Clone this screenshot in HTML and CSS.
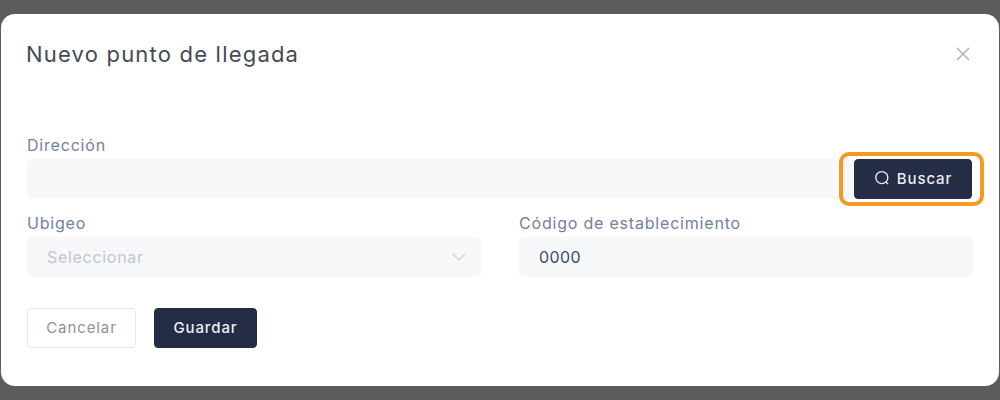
FILE: index.html
```html
<!DOCTYPE html>
<html lang="es">
<head>
    <meta charset="UTF-8">
    <title>Nuevo punto de llegada</title>
    <link rel="stylesheet" href="styles.css">
</head>
<body>
    <div class="modal">
        <div class="modal-header">
            <h2 class="modal-title">Nuevo punto de llegada</h2>
            <svg class="close-icon" width="14" height="14" viewBox="0 0 14 14" fill="none" stroke="#a9adb5" stroke-width="1.4">
                <path d="M1 1 L13 13 M13 1 L1 13"/>
            </svg>
        </div>

        <div class="field">
            <label class="field-label">Dirección</label>
            <div class="search-row">
                <div class="input"></div>
                <button class="btn btn-dark btn-search">
                    <svg width="16" height="16" viewBox="0 0 16 16" fill="none" stroke="#e4e7ec" stroke-width="1.4">
                        <circle cx="7.8" cy="7.6" r="6"/>
                        <path d="M12 12 L14 14"/>
                    </svg>
                    Buscar
                </button>
                <span class="highlight"></span>
            </div>
        </div>

        <div class="field-grid">
            <div class="field">
                <label class="field-label">Ubigeo</label>
                <div class="input select">
                    <span class="placeholder">Seleccionar</span>
                    <svg width="14" height="8" viewBox="0 0 14 8" fill="none" stroke="#ccced3" stroke-width="1.2">
                        <path d="M1 1 L7 7 L13 1"/>
                    </svg>
                </div>
            </div>
            <div class="field">
                <label class="field-label">Código de establecimiento</label>
                <div class="input value">0000</div>
            </div>
        </div>

        <div class="actions">
            <button class="btn btn-light">Cancelar</button>
            <button class="btn btn-dark">Guardar</button>
        </div>
    </div>
</body>
</html>
```

FILE: styles.css
```css
body {
    margin: 0;
    height: 400px;
    padding: 14px 1px;
    box-sizing: border-box;
    background: #5c5c5c;
    font-family: Inter, "Open Sans", sans-serif;
    overflow: hidden;
}
.modal {
    height: 372px;
    box-sizing: border-box;
    padding: 0 26px;
    background: #fff;
    border-radius: 14px;
}
.modal-header {
    display: flex;
    justify-content: space-between;
    align-items: center;
    height: 80px;
    margin-bottom: 41px;
    padding-right: 3px;
}
.modal-title {
    margin: 0 0 0 -1px;
    font-size: 22px;
    font-weight: 400;
    letter-spacing: 1.2px;
    color: #454a54;
}
.field {
    display: flex;
    flex-direction: column;
}
.field-label {
    height: 24px;
    line-height: 20px;
    font-size: 16px;
    letter-spacing: 0.8px;
    color: #72819c;
}
.search-row {
    position: relative;
    display: flex;
    margin-right: 1px;
}
.input {
    flex: 1;
    height: 40px;
    box-sizing: border-box;
    background: #f6f8fa;
    border-radius: 5px;
    padding: 0 20px;
    font-size: 16px;
    line-height: 40px;
}
.select {
    display: flex;
    justify-content: space-between;
    align-items: center;
    padding-right: 15px;
}
.placeholder {
    color: #c2c5ca;
    letter-spacing: 0.7px;
}
.value {
    color: #414b66;
    letter-spacing: 0.4px;
}
.field-grid {
    display: grid;
    grid-template-columns: 454px 454px;
    gap: 38px;
    margin-top: 14px;
}
.actions {
    display: flex;
    gap: 18px;
    margin-top: 31px;
}
.btn {
    height: 40px;
    box-sizing: border-box;
    padding: 0 0 2px;
    border-radius: 4px;
    font-family: inherit;
    font-size: 15px;
    font-weight: 500;
    letter-spacing: 0.9px;
}
.btn-dark {
    width: 103px;
    background: #252c45;
    border: 1px solid #252c45;
    color: #eceef2;
}
.btn-light {
    width: 109px;
    background: #fff;
    border: 1px solid #e6e8eb;
    color: #8b929c;
    font-weight: 400;
}
.btn-search {
    display: flex;
    align-items: center;
    justify-content: center;
    gap: 7px;
    width: 118px;
}
.highlight {
    position: absolute;
    top: -7px;
    right: -12px;
    width: 137px;
    height: 46px;
    border: 4px solid #f39a26;
    border-radius: 10px;
}
```
